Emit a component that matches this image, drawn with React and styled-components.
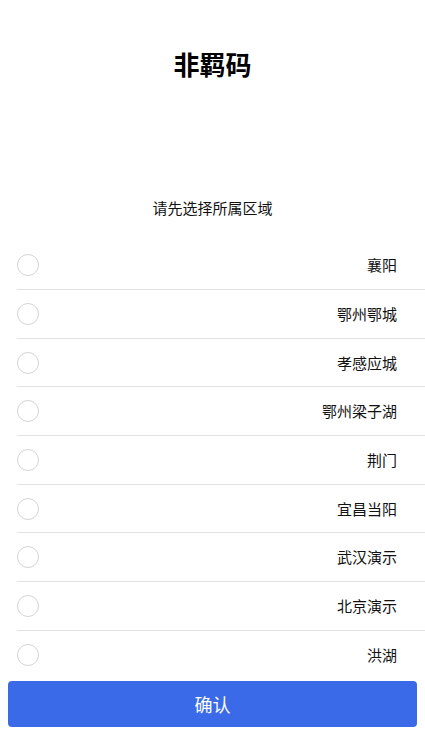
import React, { useState } from 'react'
import styled, { createGlobalStyle } from 'styled-components'

const GlobalStyle = createGlobalStyle`
  * {
    box-sizing: border-box;
  }
  body {
    margin: 0;
    background: #fff;
    font-family: "Noto Sans CJK SC", "Noto Sans", sans-serif;
    color: #111;
  }
`

const Page = styled.div`
  width: 425px;
  min-height: 755px;
  display: flex;
  flex-direction: column;
`

const Title = styled.h1`
  margin: 46px 0 0;
  font-size: 26px;
  line-height: 36px;
  font-weight: 700;
  text-align: center;
  color: #000;
`

const Hint = styled.p`
  margin: 116px 0 0;
  font-size: 15px;
  line-height: 20px;
  text-align: center;
  color: #111;
`

const List = styled.ul`
  list-style: none;
  margin: 23.5px 0 0 17px;
  padding: 0;
`

const Row = styled.li`
  height: 48.67px;
  display: flex;
  align-items: center;
  justify-content: space-between;
  padding-right: 28px;
  border-bottom: 1px solid #e2e2e2;
  cursor: pointer;

  &:last-child {
    border-bottom: none;
  }
`

const Radio = styled.span`
  width: 22px;
  height: 22px;
  border-radius: 50%;
  border: 1px solid ${p => (p.$checked ? '#3a6ae8' : '#d4d4d4')};
  background: ${p => (p.$checked ? '#3a6ae8' : '#fff')};
  box-shadow: ${p => (p.$checked ? 'inset 0 0 0 5px #fff' : 'none')};
`

const Name = styled.span`
  font-size: 15px;
  line-height: 20px;
  color: #111;
`

const Confirm = styled.button`
  margin: 2px 8px 0;
  height: 46px;
  border: none;
  border-radius: 4px;
  background: #3a6ae8;
  color: #fff;
  font-family: inherit;
  font-size: 18px;
  cursor: pointer;
`

const areas = ['襄阳', '鄂州鄂城', '孝感应城', '鄂州梁子湖', '荆门', '宜昌当阳', '武汉演示', '北京演示', '洪湖']

const App = () => {
  const [picked, setPicked] = useState(null)

  return (
    <Page>
      <GlobalStyle />
      <Title>非羁码</Title>
      <Hint>请先选择所属区域</Hint>
      <List>
        {areas.map(a => (
          <Row key={a} onClick={() => setPicked(a)}>
            <Radio $checked={picked === a} />
            <Name>{a}</Name>
          </Row>
        ))}
      </List>
      <Confirm>确认</Confirm>
    </Page>
  )
}

export default App
